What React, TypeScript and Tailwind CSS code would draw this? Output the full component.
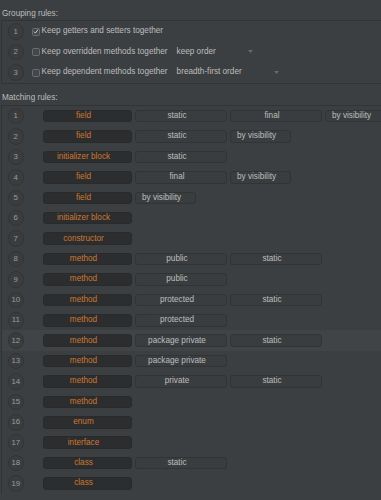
import React from 'react';

type Rule = { kind: string; mods: string[]; vis?: boolean; active?: boolean };

const rules: Rule[] = [
  { kind: 'field', mods: ['static', 'final'], vis: true },
  { kind: 'field', mods: ['static'], vis: true },
  { kind: 'initializer block', mods: ['static'] },
  { kind: 'field', mods: ['final'], vis: true },
  { kind: 'field', mods: [], vis: true },
  { kind: 'initializer block', mods: [] },
  { kind: 'constructor', mods: [] },
  { kind: 'method', mods: ['public', 'static'] },
  { kind: 'method', mods: ['public'] },
  { kind: 'method', mods: ['protected', 'static'] },
  { kind: 'method', mods: ['protected'] },
  { kind: 'method', mods: ['package private', 'static'], active: true },
  { kind: 'method', mods: ['package private'] },
  { kind: 'method', mods: ['private', 'static'] },
  { kind: 'method', mods: [] },
  { kind: 'enum', mods: [] },
  { kind: 'interface', mods: [] },
  { kind: 'class', mods: ['static'] },
  { kind: 'class', mods: [] },
];

const grouping = [
  { label: 'Keep getters and setters together', checked: true },
  { label: 'Keep overridden methods together', option: 'keep order' },
  { label: 'Keep dependent methods together', option: 'breadth-first order' },
];

function Num({ n }: { n: number }) {
  return (
    <div className="ml-[5.5px] w-[16.5px] h-[16.5px] shrink-0 rounded-full border border-[#323436] bg-[#3a3c3e] flex items-center justify-center text-[7.8px] text-[#9d9d9d]">
      {n}
    </div>
  );
}

function Caret() {
  return (
    <svg width="5" height="3" viewBox="0 0 5 3" className="ml-[32px]">
      <path d="M0 0h5L2.5 3z" fill="#67696b" />
    </svg>
  );
}

export default function App() {
  return (
    <div className="h-[500px] w-[381px] overflow-hidden bg-[#3c3f41] text-[8.2px] text-[#bdbdbd] font-['Liberation_Sans',Arial,sans-serif] pt-[7.5px]">
      <div className="pl-[2px] h-[12px] leading-[12px]">Grouping rules:</div>
      <div className="mt-[0.5px] ml-[1px] border-t border-b border-l border-[#313335]">
        {grouping.map((g, i) => (
          <div key={i} className="h-[20.5px] flex items-center pt-[0.5px]">
            <Num n={i + 1} />
            <div className="ml-[8px] w-[8px] h-[8px] rounded-[1.5px] border border-[#6b6d6f] bg-[#45484a] flex items-center justify-center">
              {g.checked && (
                <svg width="7" height="7" viewBox="0 0 7 7">
                  <path d="M1.2 3.7l1.6 1.7L5.9 1.2" stroke="#d4d4d4" strokeWidth="1.1" fill="none" />
                </svg>
              )}
            </div>
            <span className="ml-[1.5px]">{g.label}</span>
            {g.option && (
              <div className="ml-[9px] flex items-center">
                <span>{g.option}</span>
                <Caret />
              </div>
            )}
          </div>
        ))}
      </div>

      <div className="mt-[8.5px] pl-[2px] h-[12px] leading-[12px]">Matching rules:</div>
      <div className="mt-[1px] ml-[1px] border-t border-l border-[#313335]">
        {rules.map((r, i) => (
          <div
            key={i}
            className={`h-[20.42px] flex items-center whitespace-nowrap ${r.active ? 'bg-[#414446]' : ''}`}
          >
            <Num n={i + 1} />
            <div className="ml-[19px] w-[89px] h-[12.5px] shrink-0 rounded-[3px] bg-[#2c2d2e] border border-[#2a2a2b] text-[#cc7832] flex items-center justify-center pr-2">
              {r.kind}
            </div>
            {r.mods.map((m) => (
              <div
                key={m}
                className="ml-[3px] w-[92px] h-[12.5px] shrink-0 rounded-[3px] border border-[#313335] bg-[#3a3d3f] flex items-center justify-center pr-2"
              >
                {m}
              </div>
            ))}
            {r.vis && (
              <div className="ml-[3px] h-[12.5px] shrink-0 rounded-[3px] border border-[#313335] bg-[#3a3d3f] flex items-center pl-[6px] pr-[14px]">
                by visibility
              </div>
            )}
          </div>
        ))}
      </div>
    </div>
  );
}
